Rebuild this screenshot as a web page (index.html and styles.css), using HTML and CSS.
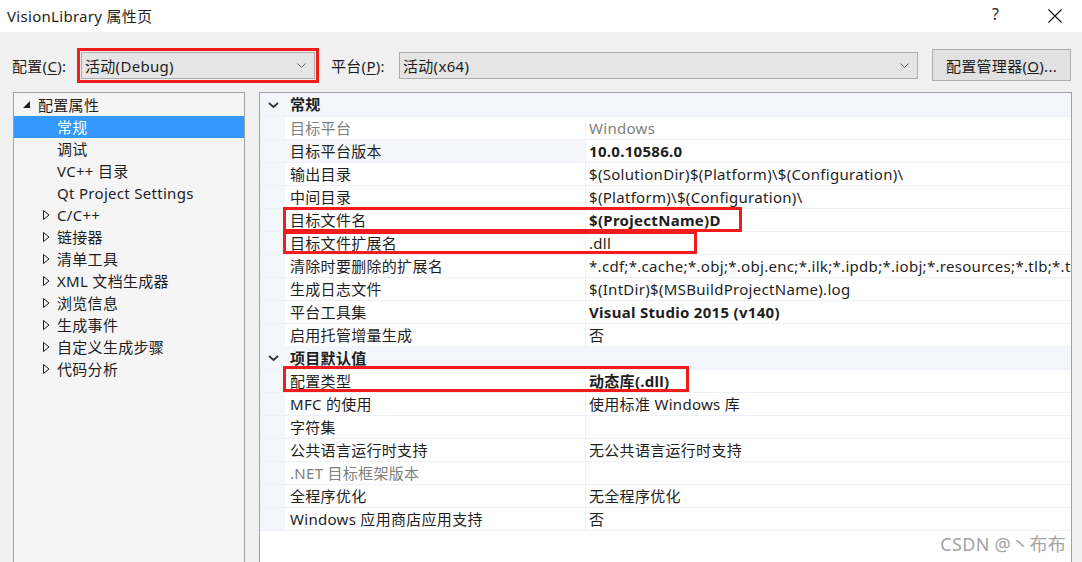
FILE: index.html
```html
<!DOCTYPE html>
<html lang="zh-CN">
<head>
    <meta charset="UTF-8">
    <title>VisionLibrary 属性页</title>
    <link rel="stylesheet" href="styles.css">
</head>
<body>
    <div class="titlebar">
        <span class="title">VisionLibrary 属性页</span>
        <span class="help">?</span>
        <span class="close">
            <svg width="14" height="14" viewBox="0 0 14 14"><path d="M0.5 0.5 L13.5 13.5 M13.5 0.5 L0.5 13.5" stroke="#111" stroke-width="1.1" fill="none"/></svg>
        </span>
    </div>

    <div class="toolbar">
        <span class="field-label cfg-label">配置(<u>C</u>):</span>
        <div class="combo combo-config marked">
            <span>活动(Debug)</span>
            <svg class="chev" width="9" height="5" viewBox="0 0 9 5"><path d="M0.5 0.5 L4.5 4.5 L8.5 0.5" stroke="#606060" fill="none"/></svg>
        </div>
        <span class="field-label plat-label">平台(<u>P</u>):</span>
        <div class="combo combo-platform">
            <span>活动(x64)</span>
            <svg class="chev" width="9" height="5" viewBox="0 0 9 5"><path d="M0.5 0.5 L4.5 4.5 L8.5 0.5" stroke="#606060" fill="none"/></svg>
        </div>
        <button class="manager-btn">配置管理器(<u>O</u>)...</button>
    </div>

    <div class="main">
        <!-- left tree -->
        <div class="tree">
            <div class="node root">
                <svg class="tri" width="8" height="8" viewBox="0 0 8 8"><path d="M7 0 L7 7 L0 7 Z" fill="#1e1e1e"/></svg>
                配置属性
            </div>
            <div class="node leaf selected">常规</div>
            <div class="node leaf">调试</div>
            <div class="node leaf">VC++ 目录</div>
            <div class="node leaf">Qt Project Settings</div>
            <div class="node branch"><svg class="tri" width="7" height="10" viewBox="0 0 7 10"><path d="M0.5 0.5 L6 5 L0.5 9.5 Z" stroke="#1e1e1e" fill="none"/></svg>C/C++</div>
            <div class="node branch"><svg class="tri" width="7" height="10" viewBox="0 0 7 10"><path d="M0.5 0.5 L6 5 L0.5 9.5 Z" stroke="#1e1e1e" fill="none"/></svg>链接器</div>
            <div class="node branch"><svg class="tri" width="7" height="10" viewBox="0 0 7 10"><path d="M0.5 0.5 L6 5 L0.5 9.5 Z" stroke="#1e1e1e" fill="none"/></svg>清单工具</div>
            <div class="node branch"><svg class="tri" width="7" height="10" viewBox="0 0 7 10"><path d="M0.5 0.5 L6 5 L0.5 9.5 Z" stroke="#1e1e1e" fill="none"/></svg>XML 文档生成器</div>
            <div class="node branch"><svg class="tri" width="7" height="10" viewBox="0 0 7 10"><path d="M0.5 0.5 L6 5 L0.5 9.5 Z" stroke="#1e1e1e" fill="none"/></svg>浏览信息</div>
            <div class="node branch"><svg class="tri" width="7" height="10" viewBox="0 0 7 10"><path d="M0.5 0.5 L6 5 L0.5 9.5 Z" stroke="#1e1e1e" fill="none"/></svg>生成事件</div>
            <div class="node branch"><svg class="tri" width="7" height="10" viewBox="0 0 7 10"><path d="M0.5 0.5 L6 5 L0.5 9.5 Z" stroke="#1e1e1e" fill="none"/></svg>自定义生成步骤</div>
            <div class="node branch"><svg class="tri" width="7" height="10" viewBox="0 0 7 10"><path d="M0.5 0.5 L6 5 L0.5 9.5 Z" stroke="#1e1e1e" fill="none"/></svg>代码分析</div>
        </div>

        <!-- property grid -->
        <div class="props">
            <div class="grid">
                <div class="row group">
                    <span class="gutter"><svg width="11" height="6" viewBox="0 0 11 6"><path d="M1 1 L5.5 5 L10 1" stroke="#333" stroke-width="1.8" fill="none"/></svg></span>
                    <span class="group-name">常规</span>
                </div>
                <div class="row disabled"><span class="gutter"></span><span class="name">目标平台</span><span class="value">Windows</span></div>
                <div class="row active"><span class="gutter"></span><span class="name">目标平台版本</span><span class="value bold">10.0.10586.0</span></div>
                <div class="row"><span class="gutter"></span><span class="name">输出目录</span><span class="value">$(SolutionDir)$(Platform)\$(Configuration)\</span></div>
                <div class="row"><span class="gutter"></span><span class="name">中间目录</span><span class="value">$(Platform)\$(Configuration)\</span></div>
                <div class="row"><span class="gutter"></span><span class="name">目标文件名</span><span class="value bold">$(ProjectName)D</span></div>
                <div class="row"><span class="gutter"></span><span class="name">目标文件扩展名</span><span class="value">.dll</span></div>
                <div class="row"><span class="gutter"></span><span class="name">清除时要删除的扩展名</span><span class="value">*.cdf;*.cache;*.obj;*.obj.enc;*.ilk;*.ipdb;*.iobj;*.resources;*.tlb;*.tli;*.tlh;*.tmp;*.rsp;*.pgc;*.pgd;*.meta</span></div>
                <div class="row"><span class="gutter"></span><span class="name">生成日志文件</span><span class="value">$(IntDir)$(MSBuildProjectName).log</span></div>
                <div class="row"><span class="gutter"></span><span class="name">平台工具集</span><span class="value bold">Visual Studio 2015 (v140)</span></div>
                <div class="row"><span class="gutter"></span><span class="name">启用托管增量生成</span><span class="value">否</span></div>
                <div class="row group">
                    <span class="gutter"><svg width="11" height="6" viewBox="0 0 11 6"><path d="M1 1 L5.5 5 L10 1" stroke="#333" stroke-width="1.8" fill="none"/></svg></span>
                    <span class="group-name">项目默认值</span>
                </div>
                <div class="row"><span class="gutter"></span><span class="name">配置类型</span><span class="value bold">动态库(.dll)</span></div>
                <div class="row"><span class="gutter"></span><span class="name">MFC 的使用</span><span class="value">使用标准 Windows 库</span></div>
                <div class="row"><span class="gutter"></span><span class="name">字符集</span><span class="value"></span></div>
                <div class="row"><span class="gutter"></span><span class="name">公共语言运行时支持</span><span class="value">无公共语言运行时支持</span></div>
                <div class="row disabled"><span class="gutter"></span><span class="name">.NET 目标框架版本</span><span class="value"></span></div>
                <div class="row"><span class="gutter"></span><span class="name">全程序优化</span><span class="value">无全程序优化</span></div>
                <div class="row"><span class="gutter"></span><span class="name">Windows 应用商店应用支持</span><span class="value">否</span></div>
            </div>

            <!-- hand-drawn highlight boxes -->
            <div class="mark mark-name"></div>
            <div class="mark mark-ext"></div>
            <div class="mark mark-type"></div>
        </div>
    </div>

    <div class="watermark">CSDN @丶布布</div>
</body>
</html>
```

FILE: styles.css
```css
* {
    margin: 0;
    padding: 0;
    box-sizing: border-box;
}

body {
    width: 1082px;
    height: 562px;
    overflow: hidden;
    background-color: #f0f0f0;
    color: #1e1e1e;
    font-family: "Noto Sans", "Noto Sans CJK SC", sans-serif;
    font-size: 15px;
    letter-spacing: 0.3px;
    position: relative;
}

/* title bar */
.titlebar {
    height: 32px;
    background-color: #fff;
    display: flex;
    align-items: center;
    padding-left: 7px;
}

.title {
    flex: 1;
    margin-top: -2px;
}

.help {
    width: 20px;
    margin-right: 36px;
    font-size: 16px;
    color: #222;
    margin-top: -4px;
}

.close {
    display: flex;
    margin-right: 20px;
    margin-top: -1px;
}

/* configuration toolbar */
.toolbar {
    display: flex;
    align-items: center;
    height: 60px;
    padding: 17px 0 11px 12px;
}

.field-label u {
    text-decoration-thickness: 1px;
    text-underline-offset: 2px;
}

.cfg-label {
    width: 69px;
}

.plat-label {
    width: 68px;
    margin-left: 16px;
}

.combo {
    height: 27px;
    background-color: #e5e5e5;
    border: 1px solid #adadad;
    display: flex;
    align-items: center;
    justify-content: space-between;
    padding: 0 8px 0 3px;
}

.combo-config {
    width: 234px;
}

.combo-platform {
    width: 519px;
}

.marked {
    outline: 3px solid #f21c1c;
    outline-offset: 1px;
}

.manager-btn {
    width: 139px;
    height: 32px;
    margin-left: 14px;
    background-color: #e1e1e1;
    border: 1px solid #adadad;
    font: inherit;
    letter-spacing: inherit;
    color: #1e1e1e;
}

/* main area */
.main {
    display: flex;
    padding-left: 13px;
    height: 480px;
}

.tree {
    width: 232px;
    background-color: #f5f5f5;
    border: 1px solid #a0a0a0;
    padding-top: 1px;
}

.node {
    height: 22px;
    line-height: 22px;
    display: flex;
    align-items: center;
    white-space: nowrap;
}

.node.root {
    padding-left: 9px;
}

.node.root .tri {
    margin-right: 7px;
    margin-top: -1px;
}

.node.leaf {
    padding-left: 43px;
}

.node.branch {
    padding-left: 29px;
}

.node.branch .tri {
    margin-right: 7px;
}

.node.selected {
    background-color: #3399ff;
    color: #fff;
}

/* property grid */
.props {
    position: relative;
    width: 813px;
    margin-left: 14px;
    background-color: #fff;
    border: 1px solid #a0a0a0;
    border-bottom: none;
}

.grid {
    border-bottom: 1px solid #eef1f7;
}

.row {
    display: grid;
    grid-template-columns: 25px 301px 1fr;
    height: 23px;
    line-height: 22px;
    border-top: 1px solid #eef1f7;
    white-space: nowrap;
}

.row:first-child {
    border-top: none;
}

.gutter {
    background-color: #f3f6fb;
    display: flex;
    align-items: center;
    justify-content: center;
    padding-left: 1px;
}

.name {
    padding-left: 5px;
    border-right: 1px solid #eef1f7;
    overflow: hidden;
}

.value {
    padding-left: 3px;
    overflow: hidden;
}

.bold {
    font-weight: bold;
}

.row.active .name {
    background-color: #f5f7fb;
}

.row.disabled {
    color: #808080;
}

.row.group {
    background-color: #f3f6fb;
    border-top-color: #f3f6fb;
}

.group-name {
    grid-column: 2 / 4;
    padding-left: 5px;
    font-weight: bold;
}

/* red annotation boxes drawn over the grid */
.mark {
    position: absolute;
    border: 3px solid #f21c1c;
}

.mark-name {
    left: 23px;
    top: 114px;
    width: 459px;
    height: 25px;
}

.mark-ext {
    left: 23px;
    top: 138px;
    width: 414px;
    height: 23px;
}

.mark-type {
    left: 23px;
    top: 273px;
    width: 406px;
    height: 26px;
}

.watermark {
    position: absolute;
    right: 16px;
    bottom: 6px;
    font-size: 18px;
    color: #a3a3a3;
}
```
